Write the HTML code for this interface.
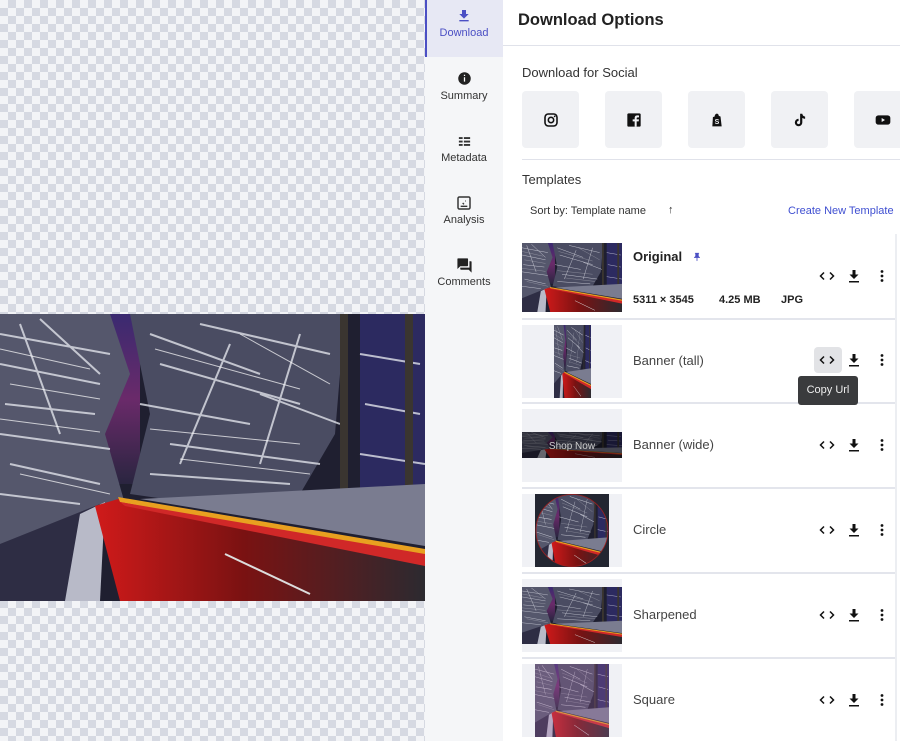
<!DOCTYPE html>
<html><head><meta charset="utf-8">
<style>
*{margin:0;padding:0;box-sizing:border-box}
body{width:900px;height:741px;overflow:hidden;font-family:"Liberation Sans",sans-serif;color:#222;background:#fff;position:relative}
.abs{position:absolute}
.checker{left:0;top:0;width:425px;height:741px;background-color:#f3f4f7;background-image:linear-gradient(45deg,#d6d9e2 25%,transparent 25%,transparent 75%,#d6d9e2 75%),linear-gradient(45deg,#d6d9e2 25%,transparent 25%,transparent 75%,#d6d9e2 75%);background-size:16px 16px;background-position:0 0,8px 8px}
.side{left:425px;top:0;width:78px;height:741px;background:#f5f6f8}
.tab{position:absolute;left:0;width:78px;text-align:center;font-size:11px;color:#333}
.tab svg{display:block;margin:0 auto}
.h1{left:518px;top:11px;font-size:16.5px;font-weight:bold;color:#222}
.tile{position:absolute;top:91px;width:57px;height:57px;background:#f0f1f4;border-radius:4px;display:flex;align-items:center;justify-content:center}
.row{position:absolute;left:522px;width:373px;height:85px;border-top:2px solid #e3e5ec}
.thumb{position:absolute;left:0;top:5px;width:100px;height:73px;background:#f0f1f5;overflow:hidden}
.name{position:absolute;left:111px;top:33px;font-size:13px;color:#444}
.meta{position:absolute;top:59px;font-size:11px;font-weight:bold;color:#222;white-space:nowrap}
</style></head><body>
<svg width="0" height="0" style="position:absolute">
<defs>
<linearGradient id="sky" x1="0" y1="0" x2="0" y2="1"><stop offset="0" stop-color="#3a2a70"/><stop offset="0.5" stop-color="#6a2a6a"/><stop offset="1" stop-color="#2a2540"/></linearGradient>
<linearGradient id="rd" x1="0" y1="0" x2="1" y2="0"><stop offset="0" stop-color="#d01a1a"/><stop offset="0.45" stop-color="#7a1212"/><stop offset="1" stop-color="#2c2a30"/></linearGradient>
<symbol id="scene" viewBox="0 0 425 287" preserveAspectRatio="none">
<rect width="425" height="287" fill="#1f1f30"/>
<rect x="70" y="0" width="70" height="170" fill="url(#sky)"/>
<rect x="360" y="0" width="65" height="200" fill="#2c2a60"/>
<path d="M0 0H110L130 60L105 120L125 190L60 230L0 240Z" fill="#55576c"/>
<path d="M130 0H345L335 120L300 180L200 190L130 180L150 100Z" fill="#4a4c62"/>
<g stroke="#e0e2ea" stroke-width="2" opacity="0.8" fill="none">
<path d="M0 20L110 40M0 50L100 70M5 90L95 100M0 120L110 135M10 150L100 170M0 180L80 190M20 10L60 120M40 5L100 60"/>
<path d="M150 20L260 60M160 50L300 90M140 90L250 110M170 130L320 150M200 10L330 40M260 80L340 110M150 160L290 170M230 30L180 150M300 20L260 150"/>
<path d="M360 40L420 50M365 90L420 100M360 140L425 150"/>
</g>
<g stroke="#ffffff" stroke-width="1" opacity="0.7" fill="none">
<path d="M0 35L90 55M10 70L100 85M0 105L100 118M20 160L110 180M155 35L300 75M150 115L300 130M180 145L310 160M240 20L330 70"/>
</g>
<rect x="340" y="0" width="8" height="195" fill="#3a3530"/>
<rect x="405" y="0" width="8" height="190" fill="#3a3530"/>
<path d="M0 230L100 190L90 287H0Z" fill="#2e2d44"/>
<path d="M80 200L105 188L100 287H65Z" fill="#b8bac8"/>
<path d="M95 192L118 185L425 250V287H120Z" fill="url(#rd)"/>
<path d="M118 183L425 235V245L120 188Z" fill="#e8a020"/>
<path d="M120 188L425 240V252L125 192Z" fill="#d02828"/>
<path d="M140 185L425 170V232Z" fill="#7a7c90"/>
<path d="M225 240L310 280" stroke="#ddd" stroke-width="2"/>
</symbol>
<g id="ico">
 <path d="M9 -3.5l-3.5 3.5 3.5 3.5M15 -3.5l3.5 3.5-3.5 3.5" fill="none" stroke="#111" stroke-width="1.5"/>
 <path d="M37.5 -6h3v4.5h3l-4.5 4.5-4.5-4.5h3zM34 5h10v1.5H34z" fill="#111"/>
 <circle cx="67" cy="-4.5" r="1.4" fill="#111"/><circle cx="67" cy="0" r="1.4" fill="#111"/><circle cx="67" cy="4.5" r="1.4" fill="#111"/>
</g>
</defs></svg>

<div class="abs checker"></div>
<svg class="abs" style="left:0;top:314px" width="425" height="287"><use href="#scene"/></svg>

<div class="abs side">
 <div class="abs" style="left:0;top:0;width:78px;height:57px;background:#e7e8f4;border-left:2px solid #4b4fc4"></div>
 <div class="tab" style="top:8px"><svg width="16" height="16" viewBox="0 0 24 24"><path d="M19 9h-4V3H9v6H5l7 7zM5 18v2h14v-2z" fill="#4b4fc4"/></svg><div style="color:#4b4fc4;margin-top:3px">Download</div></div>
 <div class="tab" style="top:71px"><svg width="15" height="15" viewBox="0 0 24 24"><circle cx="12" cy="12" r="10" fill="#222"/><rect x="11" y="10" width="2" height="7" fill="#fff"/><rect x="11" y="6" width="2" height="2" fill="#fff"/></svg><div style="margin-top:4px">Summary</div></div>
 <div class="tab" style="top:134px"><svg width="15" height="15" viewBox="0 0 24 24"><path d="M3 5h6v3H3zm8 0h10v3H11zM3 10.5h6v3H3zm8 0h10v3H11zM3 16h6v3H3zm8 0h10v3H11z" fill="#333"/></svg><div style="margin-top:3px">Metadata</div></div>
 <div class="tab" style="top:195px"><svg width="16" height="16" viewBox="0 0 24 24"><rect x="3" y="3" width="18" height="18" rx="2" fill="none" stroke="#333" stroke-width="2.2"/><path d="M7 17h10M10 12l2 2M14 9h1" stroke="#333" stroke-width="2"/></svg><div style="margin-top:3px">Analysis</div></div>
 <div class="tab" style="top:257px"><svg width="17" height="17" viewBox="0 0 24 24"><path d="M21 6h-2v9H6v2c0 .55.45 1 1 1h11l4 4V7c0-.55-.45-1-1-1zm-4 6V3c0-.55-.45-1-1-1H3c-.55 0-1 .45-1 1v14l4-4h10c.55 0 1-.45 1-1z" fill="#222"/></svg><div style="margin-top:2px">Comments</div></div>
</div>

<div class="abs" style="left:503px;top:45px;width:397px;height:1px;background:#e0e2ea"></div>
<div class="abs h1">Download Options</div>
<div class="abs" style="left:522px;top:65px;font-size:13px;color:#333">Download for Social</div>
<div class="tile" style="left:522px"><svg width="16" height="16" viewBox="0 0 24 24"><rect x="3" y="3" width="18" height="18" rx="5" fill="none" stroke="#111" stroke-width="2.4"/><circle cx="12" cy="12" r="4" fill="none" stroke="#111" stroke-width="2.4"/><circle cx="17.5" cy="6.5" r="1.3" fill="#111"/></svg></div>
<div class="tile" style="left:605px"><svg width="16" height="16" viewBox="0 0 24 24"><rect x="2" y="2" width="20" height="20" rx="2" fill="#111"/><path d="M16 22v-8h3l.5-3H16V9.5c0-1 .4-1.5 1.6-1.5H19.5V5.2C19 5.1 18 5 17 5c-2.6 0-4 1.5-4 4.1V11h-3v3h3v8z" fill="#f0f1f4"/></svg></div>
<div class="tile" style="left:688px"><svg width="14" height="16" viewBox="0 0 24 24"><path d="M5 7l3-1c0-3 2-5 4-5s3 2 3 4l3 1 2 17L4 23z" fill="#111"/><text x="8" y="19" font-size="12" font-weight="bold" fill="#f0f1f4" font-family="Liberation Sans">S</text></svg></div>
<div class="tile" style="left:771px"><svg width="15" height="16" viewBox="0 0 24 24"><path d="M13 2h3.5c.3 2.5 2 4.3 4.5 4.5V10c-1.7 0-3.3-.5-4.5-1.4V16a6 6 0 1 1-6-6v3.5a2.5 2.5 0 1 0 2.5 2.5z" fill="#111"/></svg></div>
<div class="tile" style="left:854px"><svg width="16" height="16" viewBox="0 0 24 24"><rect x="1" y="5" width="22" height="14" rx="4" fill="#111"/><path d="M10 9v6l5-3z" fill="#f0f1f4"/></svg></div>
<div class="abs" style="left:522px;top:159px;width:378px;height:1px;background:#e0e2ea"></div>
<div class="abs" style="left:522px;top:172px;font-size:13px;color:#333">Templates</div>
<div class="abs" style="left:530px;top:205px;font-size:11px;color:#333">Sort by: Template name</div>
<div class="abs" style="left:668px;top:204px;font-size:11px;color:#333">↑</div>
<div class="abs" style="left:788px;top:205px;font-size:11px;color:#3f4fd1;white-space:nowrap">Create New Template</div>
<div class="abs" style="left:895px;top:234px;width:2px;height:507px;background:#eceef2"></div>

<div class="row" style="top:233px;border-top-color:transparent">
 <div class="thumb" style="top:8px;height:69px"><svg width="100" height="69"><use href="#scene" width="100" height="69"/></svg></div>
 <div class="abs" style="left:111px;top:14px;font-size:13px;font-weight:bold;color:#222">Original</div>
 <svg class="abs" style="left:170px;top:16px" width="10" height="12" viewBox="0 0 24 24"><path d="M16 9V4h1V2H7v2h1v5c0 1.66-1.34 3-3 3v2h6v7l1 1 1-1v-7h6v-2c-1.66 0-3-1.34-3-3z" fill="#4b4fc4"/></svg>
 <div class="meta" style="left:111px">5311 × 3545</div>
 <div class="meta" style="left:197px">4.25 MB</div>
 <div class="meta" style="left:259px">JPG</div>
</div>
<div class="row" style="top:318px">
 <div class="thumb"><svg class="abs" style="left:32px;top:0" width="37" height="73"><use href="#scene" width="37" height="73"/></svg></div>
 <div class="name">Banner (tall)</div>
</div>
<div class="row" style="top:402px">
 <div class="thumb"><svg class="abs" style="left:0;top:23px" width="100" height="26"><use href="#scene" width="100" height="26"/><rect width="100" height="26" fill="#000" opacity="0.45"/><text x="50" y="17" text-anchor="middle" font-size="10" fill="#ccc" font-family="Liberation Sans">Shop Now</text></svg></div>
 <div class="name">Banner (wide)</div>
</div>
<div class="row" style="top:487px">
 <div class="thumb"><svg class="abs" style="left:13px;top:0" width="74" height="73"><rect width="74" height="73" fill="#232631"/><clipPath id="cc"><circle cx="37" cy="36.5" r="36"/></clipPath><g clip-path="url(#cc)"><use href="#scene" width="74" height="73"/></g><circle cx="37" cy="36.5" r="36" fill="none" stroke="#a02020" stroke-width="0.8"/></svg></div>
 <div class="name">Circle</div>
</div>
<div class="row" style="top:572px">
 <div class="thumb"><svg class="abs" style="left:0;top:8px" width="100" height="57"><use href="#scene" width="100" height="57"/></svg></div>
 <div class="name">Sharpened</div>
</div>
<div class="row" style="top:657px">
 <div class="thumb"><svg class="abs" style="left:13px;top:0" width="74" height="73"><use href="#scene" width="74" height="73"/><rect width="74" height="73" fill="#b070b0" opacity="0.25"/></svg></div>
 <div class="name">Square</div>
</div>

<div class="abs" style="left:814px;top:347px;width:28px;height:26px;background:#e2e3e6;border-radius:4px"></div>
<div class="abs" style="left:798px;top:376px;width:60px;height:29px;background:#3a3b3d;border-radius:3px;color:#eee;font-size:11px;text-align:center;line-height:29px">Copy Url</div>

<svg class="abs" style="left:815px;top:0" width="80" height="741">
<use href="#ico" y="276"/><use href="#ico" y="360"/><use href="#ico" y="445"/><use href="#ico" y="530"/><use href="#ico" y="615"/><use href="#ico" y="700"/>
</svg>
</body></html>
